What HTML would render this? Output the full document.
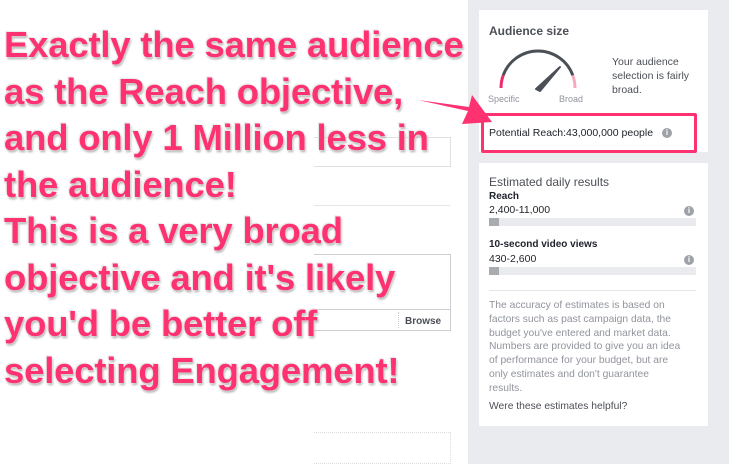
<!DOCTYPE html>
<html><head><style>
body{margin:0;width:729px;height:464px;overflow:hidden;background:#e9ebee;font-family:"Liberation Sans",Arial,sans-serif;position:relative}
.left{position:absolute;left:0;top:0;width:468px;height:464px;background:#fff}
.card{position:absolute;left:479px;width:229px;background:#fff}
.big{position:absolute;left:4px;top:22px;font-weight:bold;font-size:36.5px;line-height:46.5px;color:#fe3270;text-shadow:0 0 2px #fff,1px 2px 2px #aaa,-1px -1px 1px #ddd;white-space:nowrap;letter-spacing:-0.2px}
.sm{font-size:11px;color:#1d2129}
.info{position:absolute;width:10px;height:10px;border-radius:50%;background:#9ea2a8;color:#fff;font-size:8px;line-height:10px;text-align:center;font-weight:bold}
.bar{position:absolute;left:10px;width:207px;height:8px;background:#e9ebee}
.bar i{position:absolute;left:0;top:0;width:10px;height:8px;background:#a8abaf}
</style></head><body>
<div class="left">
  <div style="position:absolute;left:314px;top:137px;width:136px;height:28px;border:1px solid #dddfe2;border-left:none"></div>
  <div style="position:absolute;left:314px;top:205px;width:136px;border-top:1px solid #e5e5e5"></div>
  <div style="position:absolute;left:314px;top:254px;width:136px;height:75px;border:1px solid #ccd0d5;border-left:none"></div>
  <div style="position:absolute;left:314px;top:309px;width:136px;border-top:1px solid #ccd0d5"></div>
  <div style="position:absolute;left:398px;top:312px;height:16px;border-left:1px dotted #ccc"></div>
  <div style="position:absolute;left:405px;top:316px;font-size:10px;color:#4b4f56;font-weight:bold">Browse</div>
  <div style="position:absolute;left:314px;top:432px;width:136px;height:30px;border:1px dotted #ddd;border-left:none"></div>
</div>
<div class="card" style="top:10px;height:142px">
  <div style="position:absolute;left:10px;top:14px;font-size:12px;font-weight:bold;color:#4b4f56">Audience size</div>
  <svg style="position:absolute;left:0;top:0" width="229" height="110">
    <path d="M22 78 A37 37 0 0 1 24.2 65.4" stroke="#f02a68" stroke-width="3" fill="none"/>
    <path d="M24.2 65.4 A37 37 0 0 1 93.8 65.4" stroke="#4b4f56" stroke-width="3" fill="none"/>
    <path d="M93.8 65.4 A37 37 0 0 1 96 78" stroke="#f7a9bd" stroke-width="3" fill="none"/>
    <path d="M57 79 L81 57 L61 81 Z" fill="#4b4f56" stroke="#4b4f56" stroke-width="2" stroke-linejoin="round"/>
  </svg>
  <div style="position:absolute;left:9px;top:84px;font-size:9px;color:#90949c">Specific</div>
  <div style="position:absolute;left:80px;top:84px;font-size:9px;color:#90949c">Broad</div>
  <div class="sm" style="position:absolute;left:133px;top:45px;line-height:14px;color:#4b4f56;font-size:10.5px">Your audience<br>selection is fairly<br>broad.</div>
</div>
<div style="position:absolute;left:481px;top:113px;width:210px;height:34px;border:3px solid #fe3270;border-radius:2px"></div>
<div class="sm" style="position:absolute;left:489px;top:127px;font-size:10.5px;color:#1d2129">Potential Reach:43,000,000 people</div>
<div class="info" style="left:662px;top:128px">i</div>
<svg style="position:absolute;left:410px;top:85px" width="90" height="45"><path d="M8 15 L58 26 L52 39 L82 37 L62 10 L59 22 Z" fill="#fe3270"/></svg>
<div class="card" style="top:163px;height:263px">
  <div style="position:absolute;left:10px;top:12px;font-size:12px;color:#4b4f56">Estimated daily results</div>
  <div style="position:absolute;left:10px;top:28px;font-size:10px;font-weight:bold;color:#1d2129">Reach</div>
  <div style="position:absolute;left:10px;top:41px;font-size:10.5px;color:#1d2129">2,400-11,000</div>
  <div class="info" style="left:205px;top:43px">i</div>
  <div class="bar" style="top:55px"><i></i></div>
  <div style="position:absolute;left:10px;top:76px;font-size:10px;font-weight:bold;color:#1d2129">10-second video views</div>
  <div style="position:absolute;left:10px;top:90px;font-size:10.5px;color:#1d2129">430-2,600</div>
  <div class="info" style="left:205px;top:92px">i</div>
  <div class="bar" style="top:104px"><i></i></div>
  <div style="position:absolute;left:10px;top:127px;width:207px;border-top:1px solid #e5e5e5"></div>
  <div style="position:absolute;left:10px;top:136px;font-size:10.3px;line-height:13.8px;color:#90949c;white-space:nowrap">The accuracy of estimates is based on<br>factors such as past campaign data, the<br>budget you've entered and market data.<br>Numbers are provided to give you an idea<br>of performance for your budget, but are<br>only estimates and don't guarantee<br>results.</div>
  <div style="position:absolute;left:10px;top:238px;font-size:10.3px;color:#4b4f56">Were these estimates helpful?</div>
</div>
<div class="big">Exactly the same audience<br>as the Reach objective,<br>and only 1 Million less in<br>the audience!<br>This is a very broad<br>objective and it's likely<br>you'd be better off<br>selecting Engagement!</div>
</body></html>
